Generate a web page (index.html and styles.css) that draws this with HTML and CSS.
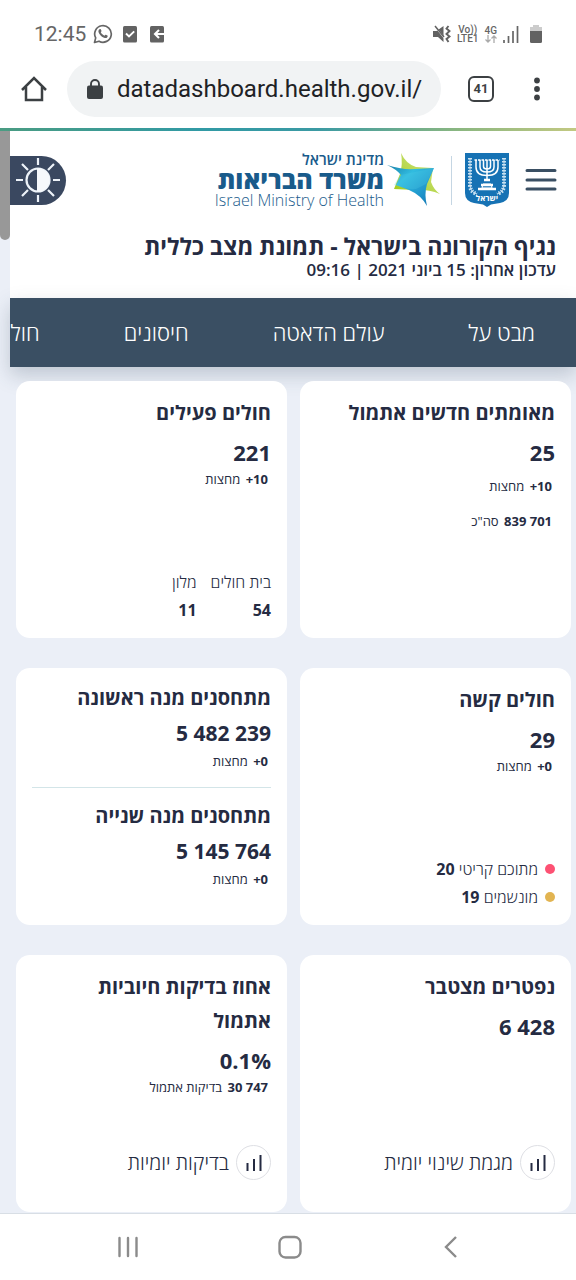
FILE: index.html
```html
<!DOCTYPE html>
<html lang="he" dir="rtl">
<head>
<meta charset="utf-8">
<meta name="viewport" content="width=device-width, initial-scale=1">
<title>נגיף הקורונה בישראל - תמונת מצב כללית</title>
<link rel="stylesheet" href="styles.css">
</head>
<body>
<div class="device">
  <div class="status-bar" dir="ltr">
    <div class="status-group">
      <span class="clock">12:45</span>
      <svg class="whatsapp" width="20" height="20" viewBox="0 0 20 20" aria-hidden="true"><path d="M1.500 18.500l1.200-4.600A8.300 8.300 0 1 1 6 17.200z" fill="none" stroke="#666" stroke-width="1.700" stroke-linejoin="round"/><path d="M6.600 5.200c.8-.5 1.300.1 1.900 1.800.1.4-.2.7-.7 1.300.9 1.700 2 2.700 3.700 3.400.6-.8.9-1.100 1.400-.9 1.700.8 1.900 1 1.800 1.500-.3 1.600-1.700 2-3 1.700C8.600 13.200 5.600 10 5.400 7.300c0-.9.5-1.700 1.200-2.100z" fill="#666"/></svg>
      <svg width="14" height="18" viewBox="0 0 14 18" aria-hidden="true"><rect y="1" width="14" height="16.500" rx="1.500" fill="#626262"/><path d="M3 8.500l3 3 5.200-5.200" fill="none" stroke="#fff" stroke-width="1.900"/></svg>
      <svg width="14" height="18" viewBox="0 0 14 18" aria-hidden="true"><rect y="1" width="14" height="16.500" rx="1.500" fill="#626262"/><path d="M14 9H5M9 5L5 9l4 4" fill="none" stroke="#fff" stroke-width="2.100"/></svg>
    </div>
    <div class="status-group status-end">
      <svg width="18" height="18" viewBox="0 0 18 18" aria-hidden="true"><path d="M0 6h3.500L10.500 1v16L5 12H0z" fill="#626262"/><path d="M1 0l12 15" stroke="#fff" stroke-width="1.500"/><path d="M2 1l9 11" stroke="#626262" stroke-width="1.500"/><path d="M15.500 1l-2 2.500 3 2.500-3 3 3 2.500-3 2.500 2 3" fill="none" stroke="#626262" stroke-width="1.900"/></svg>
      <span class="net"><span>Vo))</span><span>LTE1</span></span>
      <span class="net"><span>4G</span><svg width="12" height="8" viewBox="0 0 12 8" aria-hidden="true"><path d="M3 0v7M.5 4.500L3 7l2.500-2.500M9 8V1M6.500 3.500L9 1l2.500 2.500" fill="none" stroke="#aaa" stroke-width="1.300"/></svg></span>
      <svg width="16" height="17" viewBox="0 0 16 17" aria-hidden="true"><path d="M1 14v3M5.500 10v7M10 5v12M14.500 0v17" stroke="#666" stroke-width="1.700"/></svg>
      <svg class="battery" width="12" height="18" viewBox="0 0 12 18" aria-hidden="true"><path d="M3 0h6v2h3v4H0V2h3z" fill="#ccc"/><path d="M0 6h12v10.500a1.500 1.500 0 0 1-1.500 1.500h-9A1.500 1.500 0 0 1 0 16.500z" fill="#626262"/></svg>
    </div>
  </div>

  <div class="browser-bar" dir="ltr">
    <button class="icon-button" type="button" aria-label="Home"><svg width="26" height="26" viewBox="0 0 26 26"><path d="M1 14L13 2l12 12M5 11v13h16V11" fill="none" stroke="#3c4043" stroke-width="2.500"/></svg></button>
    <div class="address">
      <svg width="16" height="20" viewBox="0 0 16 20" aria-hidden="true"><rect y="6.500" width="16" height="13.500" rx="2" fill="#3c4043"/><path d="M4 8V5a4 4 0 0 1 8 0v3" fill="none" stroke="#3c4043" stroke-width="1.900"/></svg>
      <input class="url" type="text" aria-label="Address" value="datadashboard.health.gov.il/">
    </div>
    <button class="tabs-button" type="button" aria-label="Tabs">41</button>
    <button class="icon-button" type="button" aria-label="More"><svg width="8" height="24" viewBox="0 0 8 24"><g fill="#3c4043"><circle cx="4" cy="3.500" r="2.900"/><circle cx="4" cy="12" r="2.900"/><circle cx="4" cy="20.500" r="2.900"/></g></svg></button>
  </div>

  <div class="viewport">
    <div class="page">
      <header class="site-header">
        <div class="brand-row">
          <button class="icon-button" type="button" aria-label="תפריט"><svg width="32" height="26" viewBox="0 0 32 26"><path d="M2 3.500h28M2 13h28M2 22h28" stroke="#3a4f63" stroke-width="3" stroke-linecap="round"/></svg></button>
          <svg class="emblem" width="44" height="54" viewBox="0 0 44 54" role="img" aria-label="סמל המדינה">
            <path d="M0 0h44v40q0 8-9 10l-9 1.500-4 2.500-4-2.500-9-1.500q-9-2-9-10z" fill="#1672b4"/>
            <g fill="none" stroke="#fff"><path d="M22 7v21M18.500 7v6.500q0 2.500 3.500 2.500t3.500-2.500V7M15 7v7q0 5 7 5t7-5V7M11 7v7q0 8.500 11 8.500T33 14V7" stroke-width="1.500"/><path d="M9.500 7h25" stroke-width="1.500" stroke-dasharray="2.500 1"/><path d="M19 27h6M16 32h12M13 36h18" stroke-width="2.500"/><path d="M18 31h8l1 4H17z" stroke-width="1"/></g>
            <g fill="none" stroke="#c9e1f1"><path d="M5 5v27q0 7 7 9M39 5v27q0 7-7 9" stroke-width="4" stroke-dasharray="1.600 1.400"/><path d="M5 5v27q0 7 7 9M39 5v27q0 7-7 9" stroke-width="1"/></g>
            <text x="22" y="48" class="emblem-text" text-anchor="middle">ישראל</text>
          </svg>
          <span class="brand-rule"></span>
          <div class="ministry">
            <svg width="54" height="54" viewBox="0 0 54 54" aria-hidden="true">
              <defs>
                <linearGradient id="starBlue" x1="0" y1="0" x2="1" y2="1"><stop offset="0" stop-color="#197ea8"/><stop offset=".35" stop-color="#31bce0"/><stop offset=".7" stop-color="#2097cc"/><stop offset="1" stop-color="#1672af"/></linearGradient>
                <linearGradient id="starGreen" x1="0" y1="1" x2="1" y2="0"><stop offset="0" stop-color="#a0ca16"/><stop offset="1" stop-color="#d7e894"/></linearGradient>
              </defs>
              <path d="M14 0q5 11 15 14l17 1-2 14q3 8 9 12-13-5-25-4L7 36l6-15q3-10 1-21z" fill="url(#starGreen)"/>
              <path d="M0 12q15 5 28 4l19-1-7 16q-3 10 0 22-6-11-18-16l-13-5 5-10Q9 16 0 12z" fill="url(#starBlue)"/>
              <path d="M13 22l34-7-8 16-10 5q-8 1-22-4z" fill="#55d1e6" opacity=".25"/>
            </svg>
            <div class="ministry-text">
              <span class="state">מדינת ישראל</span>
              <span class="name">משרד הבריאות</span>
              <span class="english" dir="ltr">Israel Ministry of Health</span>
            </div>
          </div>
          <button class="contrast" type="button" aria-label="ניגודיות"><svg width="44" height="46" viewBox="0 0 44 46"><g stroke="#edf3f9" stroke-width="2.200"><path d="M22 1v7M22 38v7M0 23h7M37 23h7M6 7l6 6M32 33l6 6M38 7l-6 6M12 33l-6 6"/></g><circle cx="22" cy="23" r="11.500" fill="none" stroke="#edf3f9" stroke-width="2.200"/><path d="M21 11.500h1a11.500 11.500 0 0 1 0 23h-1z" fill="#f6f9fc"/></svg></button>
        </div>
        <div class="headline">
          <h1>נגיף הקורונה בישראל - תמונת מצב כללית</h1>
          <p>עדכון אחרון: 15 ביוני 2021 | 09:16</p>
        </div>
      </header>

      <nav class="site-nav"><a href="#overview">מבט על</a><a href="#data">עולם הדאטה</a><a href="#vaccines">חיסונים</a><a href="#patients">חול</a></nav>

      <main class="cards">
        <section class="card">
          <h2>מאומתים חדשים אתמול</h2>
          <strong class="figure">25</strong>
          <p class="note spaced"><b dir="ltr">+10</b> מחצות</p>
          <p class="note total"><b dir="ltr">839 701</b> סה"כ</p>
        </section>
        <section class="card">
          <h2>חולים פעילים</h2>
          <strong class="figure">221</strong>
          <p class="note"><b dir="ltr">+10</b> מחצות</p>
          <dl class="split card-foot">
            <div><dt>בית חולים</dt><dd>54</dd></div>
            <div><dt>מלון</dt><dd>11</dd></div>
          </dl>
        </section>
        <section class="card">
          <h2>חולים קשה</h2>
          <strong class="figure">29</strong>
          <p class="note"><b dir="ltr">+0</b> מחצות</p>
          <ul class="legend card-foot">
            <li><i class="dot critical"></i><span>מתוכם קריטי <b>20</b></span></li>
            <li><i class="dot ventilated"></i><span>מונשמים <b>19</b></span></li>
          </ul>
        </section>
        <section class="card doses">
          <div class="dose">
            <h2>מתחסנים מנה ראשונה</h2>
            <strong class="figure" dir="ltr">5 482 239</strong>
            <p class="note"><b dir="ltr">+0</b> מחצות</p>
          </div>
          <div class="dose">
            <h2>מתחסנים מנה שנייה</h2>
            <strong class="figure" dir="ltr">5 145 764</strong>
            <p class="note"><b dir="ltr">+0</b> מחצות</p>
          </div>
        </section>
        <section class="card">
          <h2>נפטרים מצטבר</h2>
          <strong class="figure" dir="ltr">6 428</strong>
          <button class="chart-link card-foot" type="button"><span class="chart-icon"><svg width="16" height="16" viewBox="0 0 16 16" aria-hidden="true"><path d="M1.500 8v8M8 4v12M14.500 0v16" stroke="#252b42" stroke-width="2"/></svg></span>מגמת שינוי יומית</button>
        </section>
        <section class="card">
          <h2>אחוז בדיקות חיוביות אתמול</h2>
          <strong class="figure" dir="ltr">0.1%</strong>
          <p class="note"><b dir="ltr">30 747</b> בדיקות אתמול</p>
          <button class="chart-link card-foot" type="button"><span class="chart-icon"><svg width="16" height="16" viewBox="0 0 16 16" aria-hidden="true"><path d="M1.500 8v8M8 4v12M14.500 0v16" stroke="#252b42" stroke-width="2"/></svg></span>בדיקות יומיות</button>
        </section>
      </main>
    </div>
    <div class="gutter"><div class="thumb"></div></div>
  </div>

  <div class="system-nav" dir="ltr">
    <button class="icon-button" type="button" aria-label="Recents"><svg width="24" height="24" viewBox="0 0 24 24"><path d="M3.500 3v18M12 3v18M20.500 3v18" stroke="#8b8b8b" stroke-width="2.400" stroke-linecap="round"/></svg></button>
    <button class="icon-button" type="button" aria-label="Home screen"><svg width="24" height="24" viewBox="0 0 24 24"><rect x="1.500" y="2" width="21" height="20.500" rx="6" fill="none" stroke="#8b8b8b" stroke-width="2.400"/></svg></button>
    <button class="icon-button" type="button" aria-label="Back"><svg width="24" height="24" viewBox="0 0 24 24"><path d="M17 2L7 12l10 10" fill="none" stroke="#8b8b8b" stroke-width="2.400"/></svg></button>
  </div>
</div>
</body>
</html>
```

FILE: styles.css
```css
* { box-sizing: border-box; }
body {
  margin: 0;
  background: #fff;
  color: #252b42;
  font-family: "Open Sans", "Noto Sans", sans-serif;
}
h1, h2, p, dl, dd, ul { margin: 0; padding: 0; }
ul { list-style: none; }
button { border: 0; padding: 0; background: none; color: inherit; font: inherit; }
svg { display: block; flex: none; }
.device { display: flex; flex-direction: column; min-height: 100vh; }

.status-bar {
  display: flex;
  justify-content: space-between;
  padding: 20px 34px 13px;
  color: #666;
  font-family: Roboto, sans-serif;
}
.status-group { display: flex; align-items: center; height: 28px; gap: 13px; }
.status-end { gap: 6px; }
.clock { font-size: 21px; line-height: 28px; }
.whatsapp { margin: 0 -3px 0 -6px; }
.net { display: flex; flex-direction: column; align-items: center; font-size: 10px; line-height: 9px; font-weight: 500; }
.battery { margin-left: 5px; }

.browser-bar {
  display: flex;
  align-items: center;
  padding: 0 35px 11px 21px;
}
.address {
  display: flex;
  flex: 1;
  align-items: center;
  gap: 14px;
  min-width: 0;
  height: 56px;
  margin: 0 27px 0 20px;
  padding: 0 10px 0 20px;
  border-radius: 28px;
  background: #f1f3f4;
}
.url {
  flex: 1;
  min-width: 0;
  border: 0;
  padding: 0;
  background: none;
  color: #202124;
  font: 24px/32px Roboto, sans-serif;
}
.tabs-button {
  width: 26px;
  height: 26px;
  margin-right: 39px;
  border: 2px solid #3c4043;
  border-radius: 6px;
  color: #3c4043;
  font: bold 13px/20px Roboto, sans-serif;
}

.viewport {
  display: flex;
  flex: 1;
  border-top: 3px solid;
  border-image: linear-gradient(90deg, #4a9c82, #319aa5 35%, #3b9aa3 55%, #8cb780 80%, #c3c982) 1;
  background: #ebeff7;
}
.page { flex: 1; min-width: 0; }
.gutter { flex: none; width: 10px; }
.thumb { height: 109px; border-radius: 0 0 5px 5px; background: #989898; }

.site-header { padding: 19px 0; background: #fff; }
.brand-row { display: flex; align-items: center; height: 60px; padding-right: 19px; }
.emblem { margin-right: 16px; }
.emblem-text { fill: #fff; font: bold 8px "Open Sans", sans-serif; }
.brand-rule { width: 1px; height: 49px; margin: 0 13px 0 10px; background: #c5d6e3; }
.ministry { display: flex; align-items: center; gap: 3px; }
.ministry-text { display: flex; flex-direction: column; color: #195b8b; white-space: nowrap; }
.state { font-size: 15px; line-height: 15px; font-weight: 600; }
.name { font-size: 25px; line-height: 24px; font-weight: 800; }
.english { font: 300 16px/18px "Open Sans", sans-serif; }
.contrast {
  display: flex;
  align-items: center;
  height: 49px;
  margin-right: auto;
  padding: 0 6px;
  border-radius: 0 25px 25px 0;
  background: #3a4860;
}
.headline { padding: 22px 20px 0; }
h1 { font-size: 23px; line-height: 28px; font-weight: 700; }
.headline p { font-size: 17px; line-height: 19px; font-weight: 600; }

.site-nav {
  display: flex;
  gap: 84px;
  overflow: hidden;
  padding: 0 41px;
  background: #3a4f63;
  box-shadow: 0 8px 18px #3a4f6340;
}
.site-nav a {
  flex: none;
  color: #fff;
  font-size: 22px;
  line-height: 69px;
  font-weight: 300;
  text-decoration: none;
}

.cards {
  display: grid;
  grid-template-columns: 1fr 1fr;
  grid-auto-rows: minmax(257px, auto);
  gap: 30px 13px;
  padding: 14px 5px 1px 6px;
}
.card {
  display: flex;
  flex-direction: column;
  align-items: flex-start;
  padding: 15px 16px 14px;
  border-radius: 14px;
  background: #fff;
}
h2 { padding-left: 8px; font-size: 20px; line-height: 34px; font-weight: 700; }
.figure { margin-top: 5px; font-size: 22px; line-height: 34px; }
.note { padding-right: 3px; font-size: 13px; line-height: 20px; font-weight: 400; }
.note b { margin-left: 2px; font-weight: 700; }
.spaced { margin-top: 7px; }
.total { margin-top: 15px; }
.card-foot { margin-top: auto; }
.split { display: flex; gap: 14px; font-size: 16px; line-height: 28px; font-weight: 300; }
.split dd { font-weight: 700; }
.legend { font-size: 16px; line-height: 28px; font-weight: 300; }
.legend li { display: flex; align-items: center; gap: 7px; }
.legend b { font-weight: 700; }
.dot { width: 10px; height: 10px; border-radius: 50%; }
.critical { background: #fd5173; }
.ventilated { background: #e2b451; }
.doses { padding-top: 13px; }
.dose { display: flex; flex-direction: column; align-items: flex-start; width: 100%; }
.dose .figure { margin-top: 1px; font-size: 21px; }
.dose .note { margin-top: 1px; }
.dose + .dose { margin-top: 16px; padding-top: 11px; border-top: 1px solid #d3e5e8; }
.chart-link {
  display: flex;
  align-items: center;
  gap: 7px;
  margin-bottom: 18px;
  font-size: 20px;
  line-height: 35px;
  font-weight: 300;
}
.chart-icon {
  display: grid;
  place-items: center;
  width: 35px;
  height: 35px;
  border: 1px solid #dedfe4;
  border-radius: 50%;
}

.system-nav {
  display: flex;
  align-items: center;
  justify-content: space-between;
  height: 67px;
  padding: 0 113px 0 116px;
  border-top: 1px solid #d8dee5;
  background: #fff;
}
```
